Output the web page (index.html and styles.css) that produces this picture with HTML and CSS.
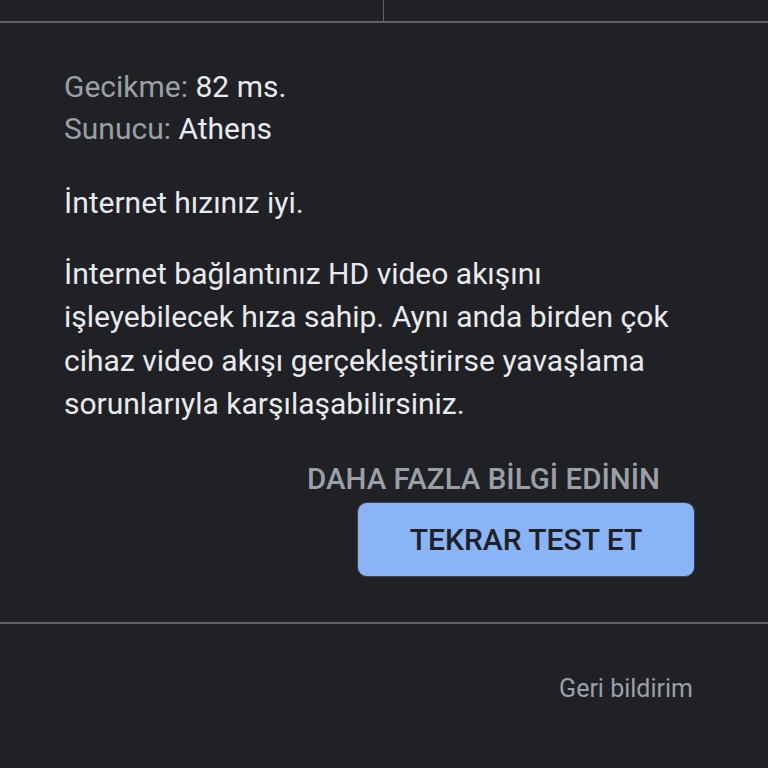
FILE: index.html
```html
<!DOCTYPE html>
<html lang="tr">
<head>
<meta charset="utf-8">
<link rel="stylesheet" href="styles.css">
</head>
<body>
<div class="top">
  <div class="half half-left"></div>
  <div class="half"></div>
</div>
<main class="main">
  <div class="stats">
    <div class="stat"><span class="label">Gecikme:</span> <span class="value">82 ms.</span></div>
    <div class="stat"><span class="label">Sunucu:</span> <span class="value">Athens</span></div>
  </div>
  <p class="summary">İnternet hızınız iyi.</p>
  <p class="desc">İnternet bağlantınız HD video akışını işleyebilecek hıza sahip. Aynı anda birden çok cihaz video akışı gerçekleştirirse yavaşlama sorunlarıyla karşılaşabilirsiniz.</p>
  <div class="actions">
    <a class="link">DAHA FAZLA BİLGİ EDİNİN</a>
    <button class="btn">TEKRAR TEST ET</button>
  </div>
</main>
<footer class="footer">
  <span class="feedback">Geri bildirim</span>
</footer>
</body>
</html>
```

FILE: styles.css
```css
html, body {
  margin: 0;
  padding: 0;
  background: #202124;
  height: 100%;
}
body {
  font-family: Roboto, "Noto Sans", sans-serif;
  color: #e8eaed;
}
.top {
  display: grid;
  grid-template-columns: 384px 1fr;
  height: 21px;
  border-bottom: 2px solid #5f6368;
}
.half-left {
  border-right: 1px solid #5f6368;
}
.main {
  padding: 43px 73px 0 64px;
  font-size: 30px;
  line-height: 43px;
}
.stats {
  line-height: 42px;
}
.label {
  color: #9aa0a6;
}
.value {
  color: #e8eaed;
}
.summary {
  margin: 31px 0 0;
}
.desc {
  margin: 28px 0 0;
  line-height: 43.3px;
}
.actions {
  display: flex;
  flex-direction: column;
  align-items: flex-end;
  margin-top: 34px;
}
.link {
  color: #9aa0a6;
  font-weight: 500;
  font-size: 29.5px;
  line-height: 40px;
  margin-right: 35px;
}
.btn {
  margin-top: 3px;
  width: 338px;
  height: 75px;
  background: #8ab4f8;
  border: 1px solid #3c4043;
  border-radius: 10px;
  color: #202124;
  font-family: Roboto, sans-serif;
  font-weight: 500;
  font-size: 30px;
  padding: 0;
}
.footer {
  margin-top: 45px;
  border-top: 2px solid #5f6368;
  display: flex;
  justify-content: flex-end;
  padding: 49px 75px 0 0;
}
.feedback {
  color: #9aa0a6;
  font-size: 25px;
  line-height: 32px;
}
```
